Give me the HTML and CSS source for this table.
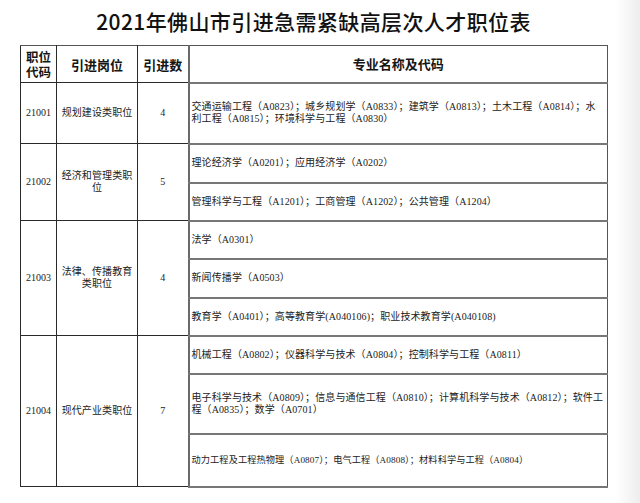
FILE: index.html
```html
<!DOCTYPE html>
<html lang="zh-CN">
<head>
<meta charset="utf-8">
<title>2021年佛山市引进急需紧缺高层次人才职位表</title>
<link rel="stylesheet" href="styles.css">
</head>
<body>
<div class="page">
  <h1 class="title">2021年佛山市引进急需紧缺高层次人才职位表</h1>
  <table class="jobs">
    <colgroup>
      <col class="c-code"><col class="c-name"><col class="c-num"><col class="c-major">
    </colgroup>
    <thead>
      <tr class="h-head">
        <th class="th-code">职位<br>代码</th>
        <th>引进岗位</th>
        <th>引进数</th>
        <th class="major">专业名称及代码</th>
      </tr>
    </thead>
    <tbody>
      <tr class="h61">
        <td class="code">21001</td>
        <td class="name">规划建设类职位</td>
        <td class="num">4</td>
        <td class="major">交通运输工程（A0823）；城乡规划学（A0833）；建筑学（A0813）；土木工程（A0814）；水利工程（A0815）；环境科学与工程（A0830）</td>
      </tr>
      <tr class="h39 group-start">
        <td class="code" rowspan="2">21002</td>
        <td class="name" rowspan="2">经济和管理类职位</td>
        <td class="num" rowspan="2">5</td>
        <td class="major">理论经济学（A0201）；应用经济学（A0202）</td>
      </tr>
      <tr class="h38">
        <td class="major">管理科学与工程（A1201）；工商管理（A1202）；公共管理（A1204）</td>
      </tr>
      <tr class="h38 group-start">
        <td class="code" rowspan="3">21003</td>
        <td class="name" rowspan="3">法律、传播教育类职位</td>
        <td class="num" rowspan="3">4</td>
        <td class="major">法学（A0301）</td>
      </tr>
      <tr class="h39">
        <td class="major">新闻传播学（A0503）</td>
      </tr>
      <tr class="h38">
        <td class="major">教育学（A0401）；高等教育学(A040106)；职业技术教育学(A040108)</td>
      </tr>
      <tr class="h38 group-start">
        <td class="code" rowspan="3">21004</td>
        <td class="name" rowspan="3">现代产业类职位</td>
        <td class="num" rowspan="3">7</td>
        <td class="major">机械工程（A0802）；仪器科学与技术（A0804）；控制科学与工程（A0811）</td>
      </tr>
      <tr class="h60">
        <td class="major">电子科学与技术（A0809）；信息与通信工程（A0810）；计算机科学与技术（A0812）；软件工程（A0835）；数学（A0701）</td>
      </tr>
      <tr class="h53">
        <td class="major small">动力工程及工程热物理（A0807）；电气工程（A0808）；材料科学与工程（A0804）</td>
      </tr>
    </tbody>
  </table>
</div>
</body>
</html>
```
FILE: styles.css
```css
html, body {
  margin: 0;
  padding: 0;
}
body {
  width: 640px;
  height: 503px;
  overflow: hidden;
  background: linear-gradient(to right, #ffffff 0, #ffffff 616px, #ededed 640px);
  color: #222;
}
.page {
  padding: 0 0 0 20px;
}
.title {
  margin: 0;
  width: 587px;
  height: 45px;
  box-sizing: border-box;
  padding-top: 7px;
  text-align: center;
  font-family: "Noto Sans CJK SC", sans-serif;
  font-size: 21px;
  font-weight: 500;
  line-height: 28px;
  color: #111;
  letter-spacing: 0.4px;
}
.jobs {
  border-collapse: collapse;
  table-layout: fixed;
  width: 587px;
  font-family: "Liberation Serif", "Noto Sans CJK SC", serif;
  font-size: 10px;
  line-height: 12px;
  color: #222;
}
.c-code { width: 36px; }
.c-name { width: 81px; }
.c-num { width: 51px; }
.c-major { width: 419px; }

.jobs th, .jobs td {
  border: 1px solid #2a2a2a;
  padding: 0;
  vertical-align: middle;
}
.jobs th {
  font-family: "Noto Sans CJK SC", sans-serif;
  font-weight: 700;
  font-size: 13px;
  line-height: 15px;
  color: #151515;
  text-align: center;
}
.jobs .th-code {
  font-size: 12.5px;
  line-height: 15px;
}
.jobs th.major, .jobs td.major {
  border-left: 2px solid #6a6a6a;
  border-right: 1.5px solid #555;
}
.jobs td.major {
  border-top: 2px solid #777;
  border-bottom: 2px solid #777;
  padding: 0 2px 0 2px;
  text-align: left;
  letter-spacing: 0.1px;
}
.jobs td.small {
  font-size: 9.2px;
}
.jobs tr.group-start td {
  border-top: 1.5px solid #333;
}
.jobs thead th {
  border-top: 1.5px solid #555;
}
.code, .num {
  text-align: center;
}
.jobs td.name {
  text-align: center;
  padding: 0 4px;
  letter-spacing: 0.1px;
}
.h-head { height: 37px; }
.h61 { height: 61px; }
.h39 { height: 39px; }
.h38 { height: 38px; }
.h60 { height: 60px; }
.h53 { height: 53px; }
```
